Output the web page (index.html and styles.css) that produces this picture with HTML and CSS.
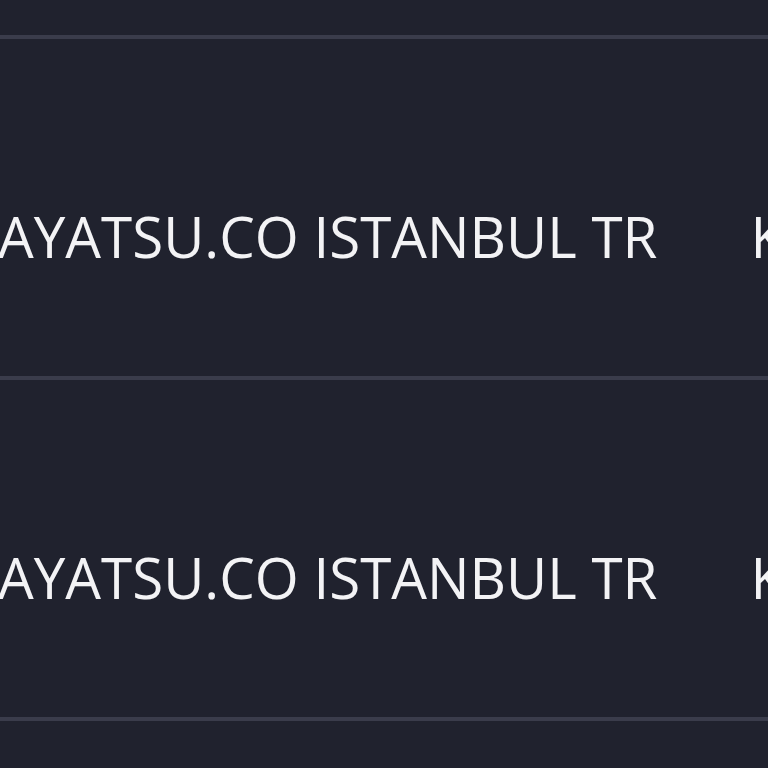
FILE: index.html
```html
<!DOCTYPE html>
<html>
<head>
<meta charset="utf-8">
<link rel="stylesheet" href="styles.css">
</head>
<body>
<div class="table">
  <div class="row row-partial"></div>
  <div class="row">
    <div class="cell cell-merchant">AYATSU.CO ISTANBUL TR</div>
    <div class="cell cell-next">K</div>
  </div>
  <div class="row">
    <div class="cell cell-merchant">AYATSU.CO ISTANBUL TR</div>
    <div class="cell cell-next">K</div>
  </div>
  <div class="row"></div>
</div>
</body>
</html>
```

FILE: styles.css
```css
html, body {
  margin: 0;
  padding: 0;
  background: #20222e;
  overflow: hidden;
  height: 768px;
}
.table {
  display: flex;
  flex-direction: column;
  width: 768px;
  font-family: "Open Sans", sans-serif;
  font-size: 56.5px;
  color: #f3f3f5;
}
.row {
  display: flex;
  flex: none;
  height: 341px;
  border-top: 4px solid #3a3c4b;
  padding-top: 159px;
  box-sizing: border-box;
  white-space: nowrap;
  gap: 93px;
  overflow: hidden;
}
.row-partial {
  height: 35px;
  border-top: none;
  padding-top: 0;
}
.row .cell {
  flex: none;
  line-height: normal;
}
.cell-merchant {
  margin-left: -2px;
}
```
